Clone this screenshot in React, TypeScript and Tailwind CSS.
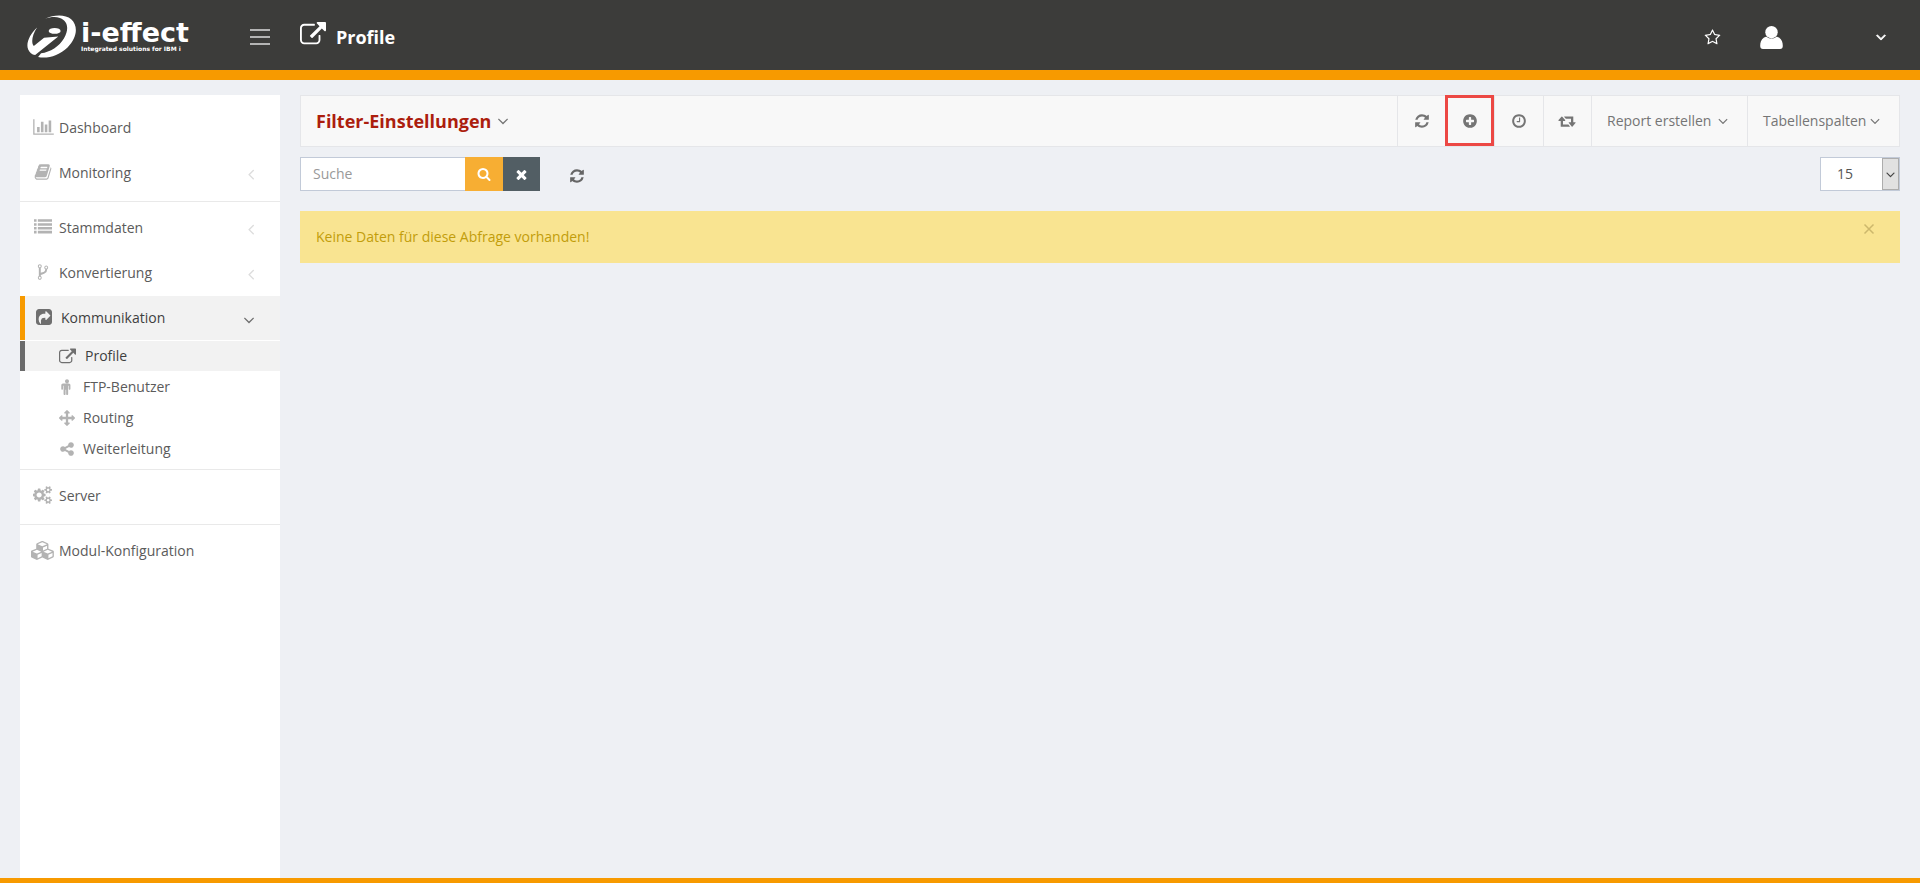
import * as React from "react";

type IconProps = { d: string; className?: string; box?: string };

function Icon({ d, className = "size-4", box = "0 0 1792 1792" }: IconProps) {
  return (
    <svg viewBox={box} className={`shrink-0 fill-current ${className}`} aria-hidden="true">
      <path d={d} />
    </svg>
  );
}

const smallCog =
  "v140q0 16-149 31-12 27-30 52 51 113 51 138 0 4-4 7-122 71-124 71-8 0-46-47t-52-68q-20 2-30 2t-30-2q-14 21-52 68t-46 47q-2 0-124-71-4-3-4-7 0-25 51-138-18-25-30-52-149-15-149-31v-140q0-16 149-31 13-29 30-52-51-113-51-138 0-4 4-7 4-2 35-20t59-34 30-16q8 0 46 46.5t52 67.5q20-2 30-2t30 2q51-71 92-112l6-2q4 0 124 70 4 3 4 7 0 25-51 138 17 23 30 52 149 15 149 31z";

const icons = {
  chart: "M640 896v512h-256v-512h256zm384-512v1024h-256v-1024h256zm1024 1152v128h-2048v-1536h128v1408h1920zm-640-896v768h-256v-768h256zm384-384v1152h-256v-1152h256z",
  book: "M1703 478q40 57 18 129l-275 906q-19 64-76.5 107.5t-122.5 43.5h-923q-77 0-148.5-53.5t-99.5-131.5q-24-67-2-127 0-4 3-27t4-37q1-8-3-21.5t-3-19.5q2-11 8-21t16.5-23.5 16.5-23.5q23-38 45-91.5t30-91.5q3-10 .5-30t-.5-28q3-11 17-28t17-23q21-36 42-92t25-90q1-9-2.5-32t.5-28q4-13 22-30.5t22-22.5q19-26 42.5-84.5t27.5-96.5q1-8-3-25.5t-2-26.5q2-8 9-18t18-23 17-21q8-12 16.5-30.5t15-35 16-36 19.5-32 26.5-23.5 36-11.5 47.5 5.5l-1 3q38-9 51-9h761q74 0 114 56t18 130l-274 906q-36 119-71.5 153.5t-128.5 34.5h-869q-27 0-38 15-11 16-1 43 24 70 144 70h923q29 0 56-15.5t35-41.5l300-987q7-22 5-57 38 15 59 43zm-1064 2q-4 13 2 22.5t20 9.5h608q13 0 25.5-9.5t16.5-22.5l21-64q4-13-2-22.5t-20-9.5h-608q-13 0-25.5 9.5t-16.5 22.5zm-83 256q-4 13 2 22.5t20 9.5h608q13 0 25.5-9.5t16.5-22.5l21-64q4-13-2-22.5t-20-9.5h-608q-13 0-25.5 9.5t-16.5 22.5z",
  list: "M0 1280h256v256h-256zM0 896h256v256h-256zM0 512h256v256h-256zM0 128h256v256h-256zM384 1280h1408v256h-1408zM384 896h1408v256h-1408zM384 512h1408v256h-1408zM384 128h1408v256h-1408z",
  fork: "M672 1472q0-40-28-68t-68-28-68 28-28 68 28 68 68 28 68-28 28-68zm0-1152q0-40-28-68t-68-28-68 28-28 68 28 68 68 28 68-28 28-68zm640 128q0-40-28-68t-68-28-68 28-28 68 28 68 68 28 68-28 28-68zm96 0q0 52-26 96.5t-70 69.5q-2 287-226 414-67 38-203 81-128 40-169.5 71t-41.5 100v26q44 25 70 69.5t26 96.5q0 80-56 136t-136 56-136-56-56-136q0-52 26-96.5t70-69.5v-820q-44-25-70-69.5t-26-96.5q0-80 56-136t136-56 136 56 56 136q0 52-26 96.5t-70 69.5v497q54-26 154-57 55-17 87.5-29.5t70.5-31 59-39.5 40.5-51 28-69.5 8.5-91.5q-44-25-70-69.5t-26-96.5q0-80 56-136t136-56 136 56 56 136z",
  share: "M1005 1035l352-352q19-19 19-45t-19-45l-352-352q-30-31-69-14-40 17-40 59v160q-119 0-216 19.5t-162.5 51-114 79-76.5 95.5-44.5 109-21.5 111.5-5 110.5q0 181 167 404 10 12 25 12 7 0 13-3 22-9 19-33-44-354 62-473 46-52 130-75.5t224-23.5v160q0 42 40 59 12 5 24 5 26 0 45-19zm531-747v960q0 119-84.5 203.5t-203.5 84.5h-960q-119 0-203.5-84.5t-84.5-203.5v-960q0-119 84.5-203.5t203.5-84.5h960q119 0 203.5 84.5t84.5 203.5z",
  external: "M1472 989v320q0 119-84.5 203.5t-203.5 84.5h-832q-119 0-203.5-84.5t-84.5-203.5v-832q0-119 84.5-203.5t203.5-84.5h704q14 0 23 9t9 23v64q0 14-9 23t-23 9h-704q-66 0-113 47t-47 113v832q0 66 47 113t113 47h832q66 0 113-47t47-113v-320q0-14 9-23t23-9h64q14 0 23 9t9 23zm384-864v512q0 26-19 45t-45 19-45-19l-176-176-652 652q-10 10-23 10t-23-10l-114-114q-10-10-10-23t10-23l652-652-176-176q-19-19-19-45t19-45 45-19h512q26 0 45 19t19 45z",
  male: "M1280 704v416q0 40-28 68t-68 28-68-28-28-68v-352h-64v912q0 46-33 79t-79 33-79-33-33-79v-464h-64v464q0 46-33 79t-79 33-79-33-33-79v-912h-64v352q0 40-28 68t-68 28-68-28-28-68v-416q0-80 56-136t136-56h640q80 0 136 56t56 136zm-160-448q0 93-65.5 158.5t-158.5 65.5-158.5-65.5-65.5-158.5 65.5-158.5 158.5-65.5 158.5 65.5 65.5 158.5z",
  arrows: "M1792 896q0 26-19 45l-256 256q-19 19-45 19t-45-19-19-45v-128h-384v384h128q26 0 45 19t19 45-19 45l-256 256q-19 19-45 19t-45-19l-256-256q-19-19-19-45t19-45 45-19h128v-384h-384v128q0 26-19 45t-45 19-45-19l-256-256q-19-19-19-45t19-45l256-256q19-19 45-19t45 19 19 45v128h384v-384h-128q-26 0-45-19t-19-45 19-45l256-256q19-19 45-19t45 19l256 256q19 19 19 45t-19 45-45 19h-128v384h384v-128q0-26 19-45t45-19 45 19l256 256q19 19 19 45z",
  shareAlt: "M1344 1024q133 0 226.5 93.5t93.5 226.5-93.5 226.5-226.5 93.5-226.5-93.5-93.5-226.5q0-12 2-34l-360-180q-92 86-218 86-133 0-226.5-93.5t-93.5-226.5 93.5-226.5 226.5-93.5q126 0 218 86l360-180q-2-22-2-34 0-133 93.5-226.5t226.5-93.5 226.5 93.5 93.5 226.5-93.5 226.5-226.5 93.5q-126 0-218-86l-360 180q2 22 2 34t-2 34l360 180q92-86 218-86z",
  cogs: "M832 896q0-106-75-181t-181-75-181 75-75 181 75 181 181 75 181-75 75-181zm768 512q0-52-38-90t-90-38-90 38-38 90q0 53 37.5 90.5t90.5 37.5 90.5-37.5 37.5-90.5zm0-1024q0-52-38-90t-90-38-90 38-38 90q0 53 37.5 90.5t90.5 37.5 90.5-37.5 37.5-90.5zm-384 421v185q0 10-7 19.5t-16 10.5l-155 24q-11 35-32 76 34 48 90 115 7 11 7 20 0 12-7 19-23 30-82.5 89.5t-78.5 59.5q-11 0-21-7l-115-90q-37 19-77 31-11 108-23 155-7 24-30 24h-186q-11 0-20-7.5t-10-17.5l-23-153q-34-10-75-31l-118 89q-7 7-20 7-11 0-21-8-144-133-144-160 0-9 7-19 10-14 41-53t47-61q-23-44-35-82l-152-24q-10-1-17-9.5t-7-19.5v-185q0-10 7-19.5t16-10.5l155-24q11-35 32-76-34-48-90-115-7-11-7-20 0-12 7-20 22-30 82-89t79-59q11 0 21 7l115 90q34-18 77-32 11-108 23-154 7-24 30-24h186q11 0 20 7.5t10 17.5l23 153q34 10 75 31l118-89q8-7 20-7 11 0 21 8 144 133 144 160 0 8-7 19-12 16-42 54t-45 60q23 48 34 82l152 23q10 2 17 10.5t7 19.5zM1856 1338" + smallCog + "M1856 314" + smallCog,
  cubes: "M512 1632l384-192v-314l-384 164v342zm-64-454l404-173-404-173-404 173zm1088 454l384-192v-314l-384 164v342zm-64-454l404-173-404-173-404 173zm-448-293l384-165v-266l-384 164v267zm-64-379l441-189-441-189-441 189zm1088 518v416q0 36-19 67t-52 47l-448 224q-25 14-57 14t-57-14l-448-224q-4-2-7-4-2 2-7 4l-448 224q-25 14-57 14t-57-14l-448-224q-33-16-52-47t-19-67v-416q0-38 21.5-70t56.5-48l434-186v-400q0-38 21.5-70t56.5-48l448-192q23-10 50-10t50 10l448 192q35 16 56.5 48t21.5 70v400l434 186q36 16 57 48t21 70z",
  refresh: "M1639 1056q0 5-1 7-64 268-268 434.5t-478 166.5q-146 0-282.5-55t-243.5-157l-129 129q-19 19-45 19t-45-19-19-45v-448q0-26 19-45t45-19h448q26 0 45 19t19 45-19 45l-137 137q71 66 161 102t187 36q134 0 250-65t186-179q11-17 53-117 8-23 30-23h192q13 0 22.5 9.5t9.5 22.5zm25-800v448q0 26-19 45t-45 19h-448q-26 0-45-19t-19-45 19-45l138-138q-148-137-349-137-134 0-250 65t-186 179q-11 17-53 117-8 23-30 23h-199q-13 0-22.5-9.5t-9.5-22.5v-7q65-268 270-434.5t480-166.5q146 0 284 55.5t245 156.5l130-129q19-19 45-19t45 19 19 45z",
  plus: "M1344 960v-128q0-26-19-45t-45-19h-256v-256q0-26-19-45t-45-19h-128q-26 0-45 19t-19 45v256h-256q-26 0-45 19t-19 45v128q0 26 19 45t45 19h256v256q0 26 19 45t45 19h128q26 0 45-19t19-45v-256h256q26 0 45-19t19-45zm320-64q0 209-103 385.5t-279.5 279.5-385.5 103-385.5-103-279.5-279.5-103-385.5 103-385.5 279.5-279.5 385.5-103 385.5 103 279.5 279.5 103 385.5z",
  clock: "M1024 544v448q0 14-9 23t-23 9h-320q-14 0-23-9t-9-23v-64q0-14 9-23t23-9h224v-352q0-14 9-23t23-9h64q14 0 23 9t9 23zm416 352q0-148-73-273t-198-198-273-73-273 73-198 198-73 273 73 273 198 198 273 73 273-73 198-198 73-273zm224 0q0 209-103 385.5t-279.5 279.5-385.5 103-385.5-103-279.5-279.5-103-385.5 103-385.5 279.5-279.5 385.5-103 385.5 103 279.5 279.5 103 385.5z",
  retweet: "M1280 1504q0 13-9.5 22.5t-22.5 9.5h-960q-8 0-13.5-2t-9-7-5.5-8-3-11.5-1-11.5v-600h-192q-26 0-45-19t-19-45q0-24 15-41l320-384q19-22 49-22t49 22l320 384q15 17 15 41 0 26-19 45t-45 19h-192v384h576q16 0 25 11l160 192q7 10 7 21zm640-416q0 24-15 41l-320 384q-20 23-49 23t-49-23l-320-384q-15-17-15-41 0-26 19-45t45-19h192v-384h-576q-16 0-25-12l-160-192q-7-9-7-20 0-13 9.5-22.5t22.5-9.5h960q8 0 13.5 2t9 7 5.5 8 3 11.5 1 11.5v600h192q26 0 45 19t19 45z",
  search: "M1216 832q0-185-131.5-316.5t-316.5-131.5-316.5 131.5-131.5 316.5 131.5 316.5 316.5 131.5 316.5-131.5 131.5-316.5zm512 832q0 52-38 90t-90 38q-54 0-90-38l-343-342q-179 124-399 124-143 0-273.5-55.5t-225-150-150-225-55.5-273.5 55.5-273.5 150-225 225-150 273.5-55.5 273.5 55.5 225 150 150 225 55.5 273.5q0 220-124 399l343 343q37 37 37 90z",
  times: "M1490 1322q0 40-28 68l-136 136q-28 28-68 28t-68-28l-294-294-294 294q-28 28-68 28t-68-28l-136-136q-28-28-28-68t28-68l294-294-294-294q-28-28-28-68t28-68l136-136q28-28 68-28t68 28l294 294 294-294q28-28 68-28t68 28l136 136q28 28 28 68t-28 68l-294 294 294 294q28 28 28 68z",
  star: "M1201 1004l306-297-422-62-189-382-189 382-422 62 306 297-73 421 378-199 377 199zm527-357q0 22-26 48l-363 354 86 500q1 7 1 20 0 50-41 50-19 0-40-12l-449-236-449 236q-22 12-40 12-21 0-31.5-14.5t-10.5-35.5q0-6 2-20l86-500-364-354q-25-27-25-48 0-37 56-46l502-73 225-455q19-41 49-41t49 41l225 455 502 73q56 9 56 46z",
  down: "M1395 736q0 13-10 23l-466 466q-10 10-23 10t-23-10l-466-466q-10-10-10-23t10-23l50-50q10-10 23-10t23 10l393 393 393-393q10-10 23-10t23 10l50 50q10 10 10 23z",
  left: "M1203 544q0 13-10 23l-393 393 393 393q10 10 10 23t-10 23l-50 50q-10 10-23 10t-23-10l-466-466q-10-10-10-23t10-23l466-466q10-10 23-10t23 10l50 50q10 10 10 23z",
};

function Logo() {
  return (
    <a href="#" className="mb-0.5 flex w-[162px] items-center gap-1 text-white" aria-label="i-effect">
      <svg viewBox="0 0 150 130" className="h-[43px] w-[50px] shrink-0 fill-white" aria-hidden="true">
        <path d="M55 11C80-1 115-3 133 13C156 34 150 70 122 98C97 122 62 133 33 127L42 116C70 112 97 95 111 71C127 43 124 18 99 9C84 4 68 7 55 11Z" />
        <path d="M30 38C8 58-5 86 3 104C7 113 14 119 24 121L94 65L51 69L20 94C11 84 15 60 30 38Z" />
        <ellipse cx="83" cy="48" rx="18" ry="9" />
      </svg>
      <span className="mt-0.5 flex flex-col font-['DejaVu_Sans',sans-serif] font-bold whitespace-nowrap">
        <span className="text-[27px] leading-6">i-effect</span>
        <span className="text-[6px] leading-2">Integrated solutions for IBM i</span>
      </span>
    </a>
  );
}

function Header() {
  return (
    <header className="flex h-20 items-center border-b-10 border-[#f79a00] bg-[#3c3c3a] pt-1 pr-[31px] pl-[27px] text-white">
      <Logo />
      <button aria-label="Menü" className="ml-[61px] flex w-5 flex-col gap-[5px]">
        <span className="h-0.5 bg-[#b4b4b4]" />
        <span className="h-0.5 bg-[#b4b4b4]" />
        <span className="h-0.5 bg-[#b4b4b4]" />
      </button>
      <h1 className="ml-[30px] flex items-center gap-2.5 text-lg font-bold">
        <Icon d={icons.external} box="64 61 1792 1792" className="mb-1 size-[26px]" />
        Profile
      </h1>
      <div className="ml-auto flex items-center">
        <button aria-label="Favoriten">
          <Icon d={icons.star} className="size-[17px]" />
        </button>
        <button aria-label="Benutzer" className="ml-[39px] flex items-center">
          <svg viewBox="0 0 23 23" className="size-[23px] fill-white" aria-hidden="true">
            <path d="M4 11.5C6 10.500 6.500 10.500 7 11C9.500 13 13.500 13 16 11C16.500 10.500 17 10.500 19 11.500C22 13.500 22.800 16.500 22.800 20Q22.800 23 20 23H3Q.2 23 .2 20C.2 16.500 1 13.500 4 11.500Z" />
            <circle cx="11.500" cy="6.200" r="6.200" />
          </svg>
          <Icon d={icons.down} className="ml-[90px] size-4 stroke-current stroke-[100]" />
        </button>
      </div>
    </header>
  );
}

type Entry = { label: string; icon: string; box?: string; size?: string; more?: boolean };

function MenuItem({ label, icon, box, size = "size-[18px]", more }: Entry) {
  return (
    <li className="pb-px">
      <a href="#" className="flex h-11 items-center gap-1 pr-5 pl-[11px]">
        <span className="flex w-6 justify-center pb-0.5 text-[#b3b3b3]">
          <Icon d={icon} box={box} className={size} />
        </span>
        {label}
        {more && <Icon d={icons.left} className="mt-0.5 ml-auto size-[18px] text-[#dddddd]" />}
      </a>
    </li>
  );
}

function SubItem({ label, icon }: Entry) {
  return (
    <li>
      <a href="#" className="flex h-[30px] items-center gap-2 pl-[39px]">
        <Icon d={icon} className="size-4 text-[#b3b3b3]" />
        {label}
      </a>
    </li>
  );
}

function Separator() {
  return <li className="mt-[5px] mb-1 border-t border-[#e9e9e9]" aria-hidden="true" />;
}

function Sidebar() {
  return (
    <nav className="w-[260px] shrink-0 bg-white pt-[11px] text-sm text-[#5b5b5b]">
      <ul>
        <MenuItem label="Dashboard" icon={icons.chart} box="0 0 2048 1792" size="h-[18px] w-[21px]" />
        <MenuItem label="Monitoring" icon={icons.book} more />
        <Separator />
        <MenuItem label="Stammdaten" icon={icons.list} more />
        <MenuItem label="Konvertierung" icon={icons.fork} more />
        <li>
          <a href="#" className="flex h-11 items-center gap-[9px] border-l-5 border-[#f79a00] bg-[#f2f2f2] pr-[22px] pl-[11px] text-[#3f3f3f]">
            <Icon d={icons.share} box="0 0 1536 1536" className="mb-0.5 size-4 text-[#6f6f6f]" />
            Kommunikation
            <Icon d={icons.down} className="mt-1 ml-auto size-[18px] text-[#6f6f6f]" />
          </a>
          <ul className="mt-px flex flex-col gap-px">
            <li>
              <a href="#" className="flex h-[30px] items-center gap-[9px] border-l-5 border-[#6b6b6b] bg-[#f2f2f2] pl-[34px] text-[#3f3f3f]">
                <Icon d={icons.external} box="64 0 1792 1792" className="size-[17px] text-[#6f6f6f]" />
                Profile
              </a>
            </li>
            <SubItem label="FTP-Benutzer" icon={icons.male} />
            <SubItem label="Routing" icon={icons.arrows} />
            <SubItem label="Weiterleitung" icon={icons.shareAlt} />
          </ul>
        </li>
        <Separator />
        <MenuItem label="Server" icon={icons.cogs} box="0 0 1920 1792" size="h-[18px] w-5" />
        <Separator />
        <MenuItem label="Modul-Konfiguration" icon={icons.cubes} box="-64 0 2176 1792" size="h-[19px] w-6" />
      </ul>
    </nav>
  );
}

function Toolbar() {
  return (
    <div className="flex h-[52px] items-stretch border border-[#e5e6e9] bg-[#f8f8f8] text-sm text-[#757575]">
      <button className="flex items-center gap-[3px] pl-[15px] text-lg font-bold text-[#ac1e0e]">
        Filter-Einstellungen
        <Icon d={icons.down} className="size-[18px] text-[#757575]" />
      </button>
      <div className="ml-auto flex w-[194px]">
        <button aria-label="Aktualisieren" className="flex flex-1 items-center justify-center border-l border-[#e5e6e9]">
          <Icon d={icons.refresh} />
        </button>
        <button aria-label="Neu" className="relative flex flex-1 items-center justify-center border-l border-[#e5e6e9]">
          <Icon d={icons.plus} />
          <span className="absolute -top-px right-0 bottom-0 -left-0.5 border-3 border-[#ec4844]" />
        </button>
        <button aria-label="Zeitplan" className="flex flex-1 items-center justify-center border-l border-[#e5e6e9]">
          <Icon d={icons.clock} />
        </button>
        <button aria-label="Wechseln" className="flex flex-1 items-center justify-center border-l border-[#e5e6e9]">
          <Icon d={icons.retweet} box="0 0 1920 1792" className="h-4 w-[18px]" />
        </button>
      </div>
      <button className="flex w-[156px] items-center gap-1 border-l border-[#e5e6e9] pl-[15px]">
        Report erstellen
        <Icon d={icons.down} />
      </button>
      <button className="flex w-[152px] items-center gap-px border-l border-[#e5e6e9] pl-[15px]">
        Tabellenspalten
        <Icon d={icons.down} />
      </button>
    </div>
  );
}

function SearchRow() {
  const [query, setQuery] = React.useState("");

  return (
    <div className="mt-2.5 flex h-[34px] items-stretch">
      <input
        type="text"
        aria-label="Suche"
        placeholder="Suche"
        value={query}
        onChange={(e) => setQuery(e.target.value)}
        className="w-[165px] border border-r-0 border-[#c2cad8] bg-white px-3 text-sm text-[#555] outline-none placeholder:text-[#999]"
      />
      <button aria-label="Suchen" className="flex w-[38px] items-center justify-center bg-[#f7ae33] text-white">
        <Icon d={icons.search} className="size-3.5" />
      </button>
      <button aria-label="Zurücksetzen" onClick={() => setQuery("")} className="flex w-[37px] items-center justify-center bg-[#525e64] text-white">
        <Icon d={icons.times} className="size-[15px]" />
      </button>
      <button aria-label="Neu laden" className="ml-[29px] flex items-center pt-1 text-[#666]">
        <Icon d={icons.refresh} />
      </button>
      <div className="relative ml-auto w-20 border border-[#c2cad8] bg-white">
        <select aria-label="Einträge pro Seite" defaultValue="15" className="h-full w-full appearance-none pl-4 text-sm text-[#555] outline-none">
          <option>15</option>
          <option>25</option>
          <option>50</option>
        </select>
        <span className="pointer-events-none absolute inset-y-0 right-0 flex w-[17px] items-center justify-center border border-[#adadad] bg-[#e1e1e1] text-[#444]">
          <Icon d={icons.down} className="size-[15px]" />
        </span>
      </div>
    </div>
  );
}

export default function App() {
  return (
    <div className="flex min-h-screen flex-col border-b-5 border-[#f79a00] bg-[#eef0f4] font-['Open_Sans',sans-serif]">
      <Header />
      <div className="flex grow gap-5 px-5 pt-[15px]">
        <Sidebar />
        <main className="grow">
          <Toolbar />
          <SearchRow />
          <div role="alert" className="mt-5 flex h-[52px] items-center justify-between bg-[#f9e491] pr-6 pl-4 text-sm text-[#c29d0b]">
            Keine Daten für diese Abfrage vorhanden!
            <button aria-label="Schließen" className="mb-4 text-[#cdb86c]">
              <svg viewBox="0 0 14 14" className="size-3.5 fill-none stroke-current stroke-[1.5]" aria-hidden="true">
                <path d="M2.500 2.500L11.500 11.500M11.500 2.500L2.500 11.500" />
              </svg>
            </button>
          </div>
        </main>
      </div>
    </div>
  );
}
